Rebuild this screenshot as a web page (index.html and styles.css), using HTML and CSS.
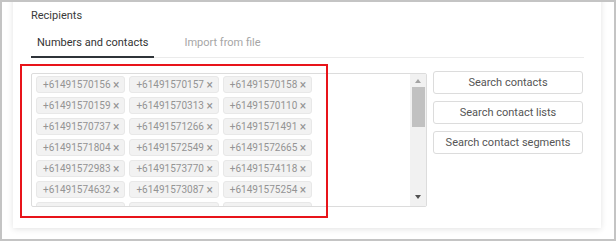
FILE: index.html
```html
<!DOCTYPE html>
<html lang="en">
<head>
    <meta charset="UTF-8">
    <meta name="viewport" content="width=device-width, initial-scale=1.0">
    <title>Recipients</title>
    <link rel="stylesheet" href="styles.css">
</head>
<body>
    <div class="frame">
        <div class="card">
            <h3 class="title">Recipients</h3>

            <div class="tabs">
                <div class="tab active">Numbers and contacts</div>
                <div class="tab">Import from file</div>
            </div>

            <div class="picker">
                <div class="chipbox">
                    <div class="chips">
                        <span class="chip">+61491570156 <i>&times;</i></span>
                        <span class="chip">+61491570157 <i>&times;</i></span>
                        <span class="chip">+61491570158 <i>&times;</i></span>
                        <span class="chip">+61491570159 <i>&times;</i></span>
                        <span class="chip">+61491570313 <i>&times;</i></span>
                        <span class="chip">+61491570110 <i>&times;</i></span>
                        <span class="chip">+61491570737 <i>&times;</i></span>
                        <span class="chip">+61491571266 <i>&times;</i></span>
                        <span class="chip">+61491571491 <i>&times;</i></span>
                        <span class="chip">+61491571804 <i>&times;</i></span>
                        <span class="chip">+61491572549 <i>&times;</i></span>
                        <span class="chip">+61491572665 <i>&times;</i></span>
                        <span class="chip">+61491572983 <i>&times;</i></span>
                        <span class="chip">+61491573770 <i>&times;</i></span>
                        <span class="chip">+61491574118 <i>&times;</i></span>
                        <span class="chip">+61491574632 <i>&times;</i></span>
                        <span class="chip">+61491573087 <i>&times;</i></span>
                        <span class="chip">+61491575254 <i>&times;</i></span>
                        <span class="chip">+61491575730 <i>&times;</i></span>
                        <span class="chip">+61491576063 <i>&times;</i></span>
                        <span class="chip">+61491576190 <i>&times;</i></span>
                    </div>
                    <div class="scrollbar">
                        <span class="arrow up"></span>
                        <span class="thumb"></span>
                        <span class="arrow down"></span>
                    </div>
                </div>

                <div class="actions">
                    <button class="btn">Search contacts</button>
                    <button class="btn">Search contact lists</button>
                    <button class="btn">Search contact segments</button>
                </div>
            </div>

            <div class="highlight"></div>
        </div>
    </div>
</body>
</html>
```

FILE: styles.css
```css
body {
    margin: 0;
    font-family: Roboto, "Liberation Sans", sans-serif;
    background-color: #fff;
    color: #333;
}

.frame {
    height: 241px;
    box-sizing: border-box;
    border: 2px solid #c4c4c4;
    overflow: hidden;
    padding: 0 13px 0 11px;
}

.card {
    position: relative;
    margin-top: -12px;
    height: 238px;
    box-sizing: border-box;
    padding: 19px 17px 0 18px;
    background-color: #fff;
    box-shadow: 0 1px 6px rgba(0, 0, 0, 0.12);
}

.title {
    margin: 0;
    font-size: 11px;
    font-weight: normal;
    color: #3a3a3a;
    line-height: 14px;
}

.tabs {
    display: flex;
    gap: 24px;
    margin-top: 9px;
    border-bottom: 1px solid #ebebeb;
}

.tab {
    font-size: 11px;
    line-height: 14px;
    padding: 4px 6px 6px;
    color: #a6a6a6;
    margin-bottom: -1px;
    border-bottom: 2px solid transparent;
}

.tab.active {
    color: #333;
    border-bottom-color: #2f3439;
}

.picker {
    display: flex;
    align-items: flex-start;
    gap: 6px;
    margin-top: 13px;
}

.chipbox {
    display: flex;
    width: 396px;
    height: 134px;
    margin-top: 2px;
    box-sizing: border-box;
    border: 1px solid #dcdcdc;
    border-radius: 2px;
    overflow: hidden;
}

.chips {
    flex: 1;
    display: flex;
    flex-wrap: wrap;
    align-content: flex-start;
    gap: 4px;
    padding: 2px 80px 0 4px;
    overflow: hidden;
}

.chip {
    display: inline-flex;
    align-items: center;
    height: 17px;
    box-sizing: border-box;
    padding: 0 5px 0 6px;
    background-color: #f2f2f2;
    border: 1px solid #e8e8e8;
    border-radius: 3px;
    font-size: 10px;
    color: #949494;
    white-space: pre;
}

.chip i {
    font-style: normal;
    font-size: 12px;
    line-height: 12px;
    color: #949494;
}

.scrollbar {
    position: relative;
    width: 16px;
    background-color: #f1f1f1;
    display: flex;
    flex-direction: column;
    align-items: center;
}

.thumb {
    width: 13px;
    height: 40px;
    margin-top: 4px;
    background-color: #c1c1c1;
}

.arrow {
    width: 0;
    height: 0;
    border-left: 3.5px solid transparent;
    border-right: 3.5px solid transparent;
}

.arrow.up {
    margin-top: 5px;
    border-bottom: 4px solid #a3a3a3;
}

.arrow.down {
    margin-top: auto;
    margin-bottom: 7px;
    border-top: 4px solid #505050;
}

.actions {
    display: flex;
    flex-direction: column;
    gap: 7px;
    width: 150px;
}

.btn {
    height: 23px;
    padding: 0;
    font-family: inherit;
    font-size: 11px;
    color: #555;
    background-color: #fff;
    border: 1px solid #dcdcdc;
    border-radius: 3px;
}

.highlight {
    position: absolute;
    left: 7px;
    top: 74px;
    width: 308px;
    height: 154px;
    box-sizing: border-box;
    border: 2px solid #e8141a;
}
```
